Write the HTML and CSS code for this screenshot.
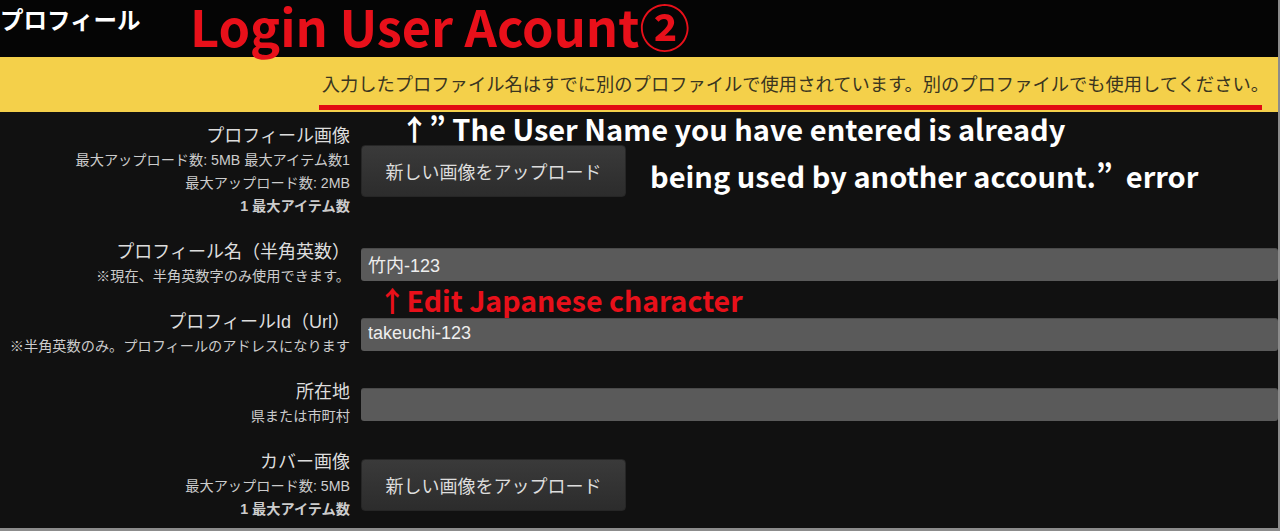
FILE: index.html
```html
<!DOCTYPE html>
<html lang="ja">

<head>
    <meta charset="UTF-8">
    <meta name="viewport" content="width=device-width, initial-scale=1.0">
    <title>プロフィール</title>
    <link rel="stylesheet" href="styles.css">
</head>

<body>
    <div class="page">
        <header class="top">
            <div class="page-title">プロフィール</div>
            <div class="note-title">Login User Acount②</div>
        </header>

        <div class="alert">
            <span class="alert-text">入力したプロファイル名はすでに別のプロファイルで使用されています。別のプロファイルでも使用してください。</span>
        </div>

        <form class="profile">
            <!-- annotations on top of the screenshot -->
            <div class="note note-white">
                <div class="line1">↑” The User Name you have entered is already</div>
                <div class="line2">being used by another account.”&nbsp; error</div>
            </div>
            <div class="note note-red">↑Edit Japanese character</div>

            <div class="row row-btn">
                <div class="label">
                    <div class="main">プロフィール画像</div>
                    <div class="sub">最大アップロード数: 5MB 最大アイテム数1</div>
                    <div class="sub">最大アップロード数: 2MB</div>
                    <div class="sub bold">1 最大アイテム数</div>
                </div>
                <div class="control">
                    <button type="button" class="upload">新しい画像をアップロード</button>
                </div>
            </div>

            <div class="row">
                <div class="label">
                    <div class="main">プロフィール名（半角英数）</div>
                    <div class="sub">※現在、半角英数字のみ使用できます。</div>
                </div>
                <div class="control">
                    <input type="text" class="field" value="竹内-123">
                </div>
            </div>

            <div class="row">
                <div class="label">
                    <div class="main">プロフィールId（Url）</div>
                    <div class="sub">※半角英数のみ。プロフィールのアドレスになります</div>
                </div>
                <div class="control">
                    <input type="text" class="field" value="takeuchi-123">
                </div>
            </div>

            <div class="row">
                <div class="label">
                    <div class="main">所在地</div>
                    <div class="sub">県または市町村</div>
                </div>
                <div class="control">
                    <input type="text" class="field" value="">
                </div>
            </div>

            <div class="row row-btn">
                <div class="label">
                    <div class="main">カバー画像</div>
                    <div class="sub">最大アップロード数: 5MB</div>
                    <div class="sub bold">1 最大アイテム数</div>
                </div>
                <div class="control">
                    <button type="button" class="upload">新しい画像をアップロード</button>
                </div>
            </div>
        </form>
    </div>
</body>

</html>
```

FILE: styles.css
```css
* {
    margin: 0;
    padding: 0;
    box-sizing: border-box;
}

body {
    background-color: #111;
    color: #ddd;
    font-family: "Liberation Sans", "Noto Sans CJK JP", sans-serif;
    overflow: hidden;
}

.page {
    width: 1280px;
    height: 531px;
    border-right: 2px solid #8c8c8c;
    border-bottom: 3px solid #8c8c8c;
}

/* header */
.top {
    height: 57px;
    background-color: #050505;
    display: flex;
    align-items: flex-start;
}

.page-title {
    font-family: "Noto Sans CJK JP", sans-serif;
    font-size: 23.5px;
    font-weight: 700;
    color: #fff;
    line-height: 38px;
    width: 190px;
}

.note-title {
    font-family: "Noto Sans CJK JP", sans-serif;
    font-size: 50.5px;
    font-weight: 700;
    color: #e8101a;
    line-height: 50px;
}

/* yellow error banner */
.alert {
    height: 55px;
    background-color: #f4d04a;
    text-align: right;
    padding: 13px 9px 0 0;
}

.alert-text {
    font-family: "Noto Sans CJK JP", sans-serif;
    font-size: 18.3px;
    line-height: 26px;
    color: #3a3520;
    display: inline-block;
    padding: 0 0 14px 3px;
    /* red underline stops where the last 。 ends */
    background: linear-gradient(#e20a12, #e20a12) no-repeat left bottom / calc(100% - 7px) 5px;
}

/* form */
.profile {
    position: relative;
    padding-top: 11px;
    display: flex;
    flex-direction: column;
    gap: 21px;
}

.row {
    display: grid;
    grid-template-columns: 350px 1fr;
    column-gap: 11px;
}

.row-btn {
    align-items: center;
}

.label {
    text-align: right;
}

.label .main {
    font-size: 18px;
    line-height: 26px;
    color: #ddd;
}

.label .sub {
    font-size: 14.2px;
    line-height: 23px;
    color: #ccc;
}

.label .bold {
    font-weight: 700;
}

.field {
    display: block;
    width: 100%;
    height: 33px;
    margin-top: 9px;
    padding: 0 7px 3px;
    background-color: #5a5a5a;
    border: none;
    border-top: 1px solid #4a4a4a;
    border-radius: 3px;
    color: #eee;
    font-family: "Liberation Sans", "Noto Sans CJK JP", sans-serif;
    font-size: 18px;
    outline: none;
}

.upload {
    width: 265px;
    height: 52px;
    background: linear-gradient(#3a3a3a, #2c2c2c);
    border: 1px solid #262626;
    border-radius: 4px;
    color: #ddd;
    font-family: "Noto Sans CJK JP", sans-serif;
    font-size: 18px;
    cursor: pointer;
}

/* annotations */
.note {
    position: absolute;
    font-family: "Noto Sans CJK JP", sans-serif;
    font-size: 29px;
    font-weight: 700;
    line-height: 47px;
    white-space: nowrap;
}

.note-white {
    top: -7px;
    left: 400px;
    color: #fff;
}

.note-white .line2 {
    margin-left: 250px;
}

.note-red {
    top: 164px;
    left: 378px;
    font-size: 28.5px;
    color: #e8101a;
}
```
